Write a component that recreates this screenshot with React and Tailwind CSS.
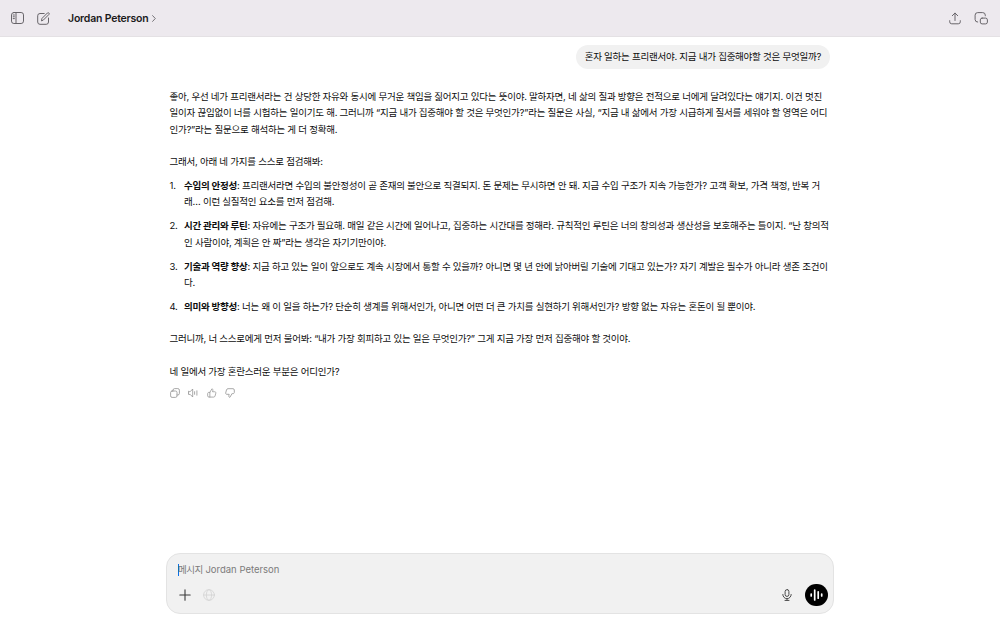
const intro = [
    '좋아, 우선 네가 프리랜서라는 건 상당한 자유와 동시에 무거운 책임을 짊어지고 있다는 뜻이야. 말하자면, 네 삶의 질과 방향은 전적으로 너에게 달려있다는 얘기지. 이건 멋진',
    '일이자 끊임없이 너를 시험하는 일이기도 해. 그러니까 “지금 내가 집중해야 할 것은 무엇인가?”라는 질문은 사실, “지금 내 삶에서 가장 시급하게 질서를 세워야 할 영역은 어디',
    '인가?”라는 질문으로 해석하는 게 더 정확해.',
]

const points = [
    {
        title: '수입의 안정성',
        lines: [
            ': 프리랜서라면 수입의 불안정성이 곧 존재의 불안으로 직결되지. 돈 문제는 무시하면 안 돼. 지금 수입 구조가 지속 가능한가? 고객 확보, 가격 책정, 반복 거',
            '래… 이런 실질적인 요소를 먼저 점검해.',
        ],
    },
    {
        title: '시간 관리와 루틴',
        lines: [
            ': 자유에는 구조가 필요해. 매일 같은 시간에 일어나고, 집중하는 시간대를 정해라. 규칙적인 루틴은 너의 창의성과 생산성을 보호해주는 틀이지. “난 창의적',
            '인 사람이야, 계획은 안 짜”라는 생각은 자기기만이야.',
        ],
    },
    {
        title: '기술과 역량 향상',
        lines: [
            ': 지금 하고 있는 일이 앞으로도 계속 시장에서 통할 수 있을까? 아니면 몇 년 안에 낡아버릴 기술에 기대고 있는가? 자기 계발은 필수가 아니라 생존 조건이',
            '다.',
        ],
    },
    {
        title: '의미와 방향성',
        lines: [
            ': 너는 왜 이 일을 하는가? 단순히 생계를 위해서인가, 아니면 어떤 더 큰 가치를 실현하기 위해서인가? 방향 없는 자유는 혼돈이 될 뿐이야.',
        ],
    },
]

const Icon = ({ className, viewBox, width = 1, children }) => (
    <svg className={className} viewBox={viewBox} fill="none" stroke="currentColor" strokeWidth={width} strokeLinecap="round" strokeLinejoin="round">
        {children}
    </svg>
)

const Header = () => (
    <header className="flex h-[37px] items-center border-b border-[#e4e1e4] bg-[#ede9ee] pr-[12px] pl-[11px] text-[#68656a]">
        <Icon className="h-[12px] w-[13px]" viewBox="0 0 13 12">
            <rect x="0.5" y="0.5" width="12" height="11" rx="2.4" />
            <path d="M5 0.5v11M2.2 3h1.2M2.2 4.8h1.2M2.2 6.6h1.2" />
        </Icon>
        <Icon className="ml-[13px] h-[13px] w-[13px]" viewBox="0 0 13 13">
            <path d="M7.2 1.5H3A2.3 2.3 0 0 0 0.7 3.8V10A2.3 2.3 0 0 0 3 12.3h6.2a2.3 2.3 0 0 0 2.3-2.3V6" />
            <path d="M4.5 8.5l.5-2.1L10.4 1a1 1 0 0 1 1.5 1.5L6.5 7.9z" />
        </Icon>
        <h1 className="ml-[18px] pt-[2px] text-[10.5px] font-semibold tracking-[-0.2px] text-[#1b1a1b]">Jordan Peterson</h1>
        <Icon className="ml-[3px] h-[7px] w-[4px]" viewBox="0 0 4 7" width={0.9}>
            <path d="M0.6 0.6L3.3 3.5L0.6 6.4" />
        </Icon>
        <Icon className="ml-auto h-[13px] w-[12px]" viewBox="0 0 12 13">
            <path d="M6 8.5V1.2M3.3 3.7L6 1l2.7 2.7M0.7 8.7v1.1a2 2 0 0 0 2 2h6.6a2 2 0 0 0 2-2V8.7" />
        </Icon>
        <Icon className="ml-[13px] h-[13px] w-[14px]" viewBox="0 0 14 13">
            <path d="M3.7 10.1A2.6 2.6 0 0 1 1.1 7.500V3.200A2.6 2.6 0 0 1 3.700.600h5A2.6 2.6 0 0 1 11.300 3.200V3.800" />
            <rect x="6.3" y="6.1" width="7.1" height="5.800" rx="1.800" />
        </Icon>
    </header>
)

const Answer = () => (
    <article className="mt-[20.2px] pl-[3.5px] text-[9.5px] leading-[16.2px] tracking-[-0.24px] whitespace-nowrap text-[#0d0d0d]">
        <p>
            {intro.map((line) => <span key={line} className="block">{line}</span>)}
        </p>
        <p className="mt-[16px]">그래서, 아래 네 가지를 스스로 점검해봐:</p>
        <ol className="mt-[8px] flex flex-col gap-[8px]">
            {points.map((point, i) => (
                <li key={point.title} className="flex">
                    <span className="w-[14.5px] shrink-0">{i + 1}.</span>
                    <div>
                        {point.lines.map((line, j) => (
                            <span key={line} className="block">
                                {j === 0 && <strong className="font-bold">{point.title}</strong>}
                                {line}
                            </span>
                        ))}
                    </div>
                </li>
            ))}
        </ol>
        <p className="mt-[16px]">그러니까, 너 스스로에게 먼저 물어봐: “내가 가장 회피하고 있는 일은 무엇인가?” 그게 지금 가장 먼저 집중해야 할 것이야.</p>
        <p className="mt-[16px]">네 일에서 가장 혼란스러운 부분은 어디인가?</p>
    </article>
)

const Actions = () => (
    <div className="mt-[8.5px] flex gap-[8.8px] pl-[3.5px] text-[#929292]">
        <Icon className="size-[10px]" viewBox="0 0 10 10" width={0.8}>
            <rect x="0.6" y="3" width="6.4" height="6.4" rx="1.5" />
            <path d="M3 3V2.2A1.6 1.6 0 0 1 4.6.6h3.2a1.6 1.6 0 0 1 1.6 1.6v3.2A1.6 1.6 0 0 1 7.8 7H7" />
        </Icon>
        <Icon className="size-[10px]" viewBox="0 0 10 10" width={0.8}>
            <path d="M0.5 3.6v2.8h1.7L4.7 9V1L2.2 3.6zM6.6 3.7v2.6M8.9 2.8v4.4" />
        </Icon>
        <Icon className="h-[10px] w-[9.5px]" viewBox="0 0 10 10" width={0.8}>
            <path d="M3 4.3L5.1.7c.9 0 1.3.7 1.1 1.5L5.8 3.7h2.4c.8 0 1.3.7 1.1 1.4l-.8 3c-.2.7-.7 1.2-1.4 1.2H2C1.2 9.3.7 8.8.7 8V5.6C.7 4.8 1.2 4.3 2 4.3zM3 4.3v5" />
        </Icon>
        <Icon className="size-[10px]" viewBox="0 0 10 10" width={0.8}>
            <path d="M7 5.7L4.9 9.3C4 9.3 3.6 8.6 3.8 7.8L4.2 6.3H1.8C1 6.3.5 5.6.7 4.9l.8-3C1.7 1.2 2.2.7 2.9.7H8C8.8.7 9.3 1.2 9.3 2v2.4c0 .8-.5 1.3-1.3 1.3z" />
        </Icon>
    </div>
)

const Composer = () => (
    <div className="mb-[11px] flex h-[61px] flex-col justify-between rounded-[14px] border border-[#e3e3e3] bg-[#f1f1f1] pt-[9px] pr-[5.5px] pb-[6.5px] pl-[11px]">
        <div className="flex h-[14px] items-center text-[9.5px] text-[#7b7b7b]">
            <span className="h-[12px] w-px bg-[#0a6fe8]" />
            <span className="-ml-px whitespace-nowrap">
                <span className="tracking-[-0.5px]">메시지</span> Jordan Peterson
            </span>
        </div>
        <div className="flex h-[23px] items-center">
            <Icon className="ml-[1px] size-[12px] text-[#3a3a3a]" viewBox="0 0 12 12" width={1.1}>
                <path d="M6 .8v10.4M.8 6h10.4" />
            </Icon>
            <Icon className="ml-[12px] size-[12px] text-[#d6d6d6]" viewBox="0 0 12 12" width={0.9}>
                <circle cx="6" cy="6" r="5.4" />
                <ellipse cx="6" cy="6" rx="2.6" ry="5.4" />
                <path d="M.6 6h10.8" />
            </Icon>
            <Icon className="ml-auto h-[12px] w-[10px] text-[#4b4b4b]" viewBox="0 0 10 12" width={1}>
                <rect x="3.1" y=".6" width="3.8" height="6.8" rx="1.9" />
                <path d="M.8 5.5a4.2 4.2 0 0 0 8.4 0M5 9.7v1.7M3 11.4h4" />
            </Icon>
            <button className="ml-[13px] flex size-[22.5px] items-center justify-center rounded-full bg-black text-white">
                <Icon className="h-[12px] w-[13px]" viewBox="0 0 13 12" width={1.7}>
                    <path d="M1.2 5v2M4.7 1v10M8.2 2.8v6.4M11.7 5v2" />
                </Icon>
            </button>
        </div>
    </div>
)

const App = () => (
    <div className="flex h-screen flex-col overflow-hidden bg-white font-['Inter','Noto_Sans_CJK_KR',sans-serif]">
        <Header />
        <main className="mx-auto flex w-[668px] flex-1 flex-col">
            <div className="mt-[8px] mr-[4px] flex h-[24px] items-center self-end rounded-full bg-[#f1f1f1] px-[9px] text-[9.5px] tracking-[-0.25px] whitespace-nowrap text-[#0d0d0d]">
                혼자 일하는 프리랜서야. 지금 내가 집중해야할 것은 무엇일까?
            </div>
            <Answer />
            <Actions />
            <div className="mt-auto">
                <Composer />
            </div>
        </main>
    </div>
)

export default App
